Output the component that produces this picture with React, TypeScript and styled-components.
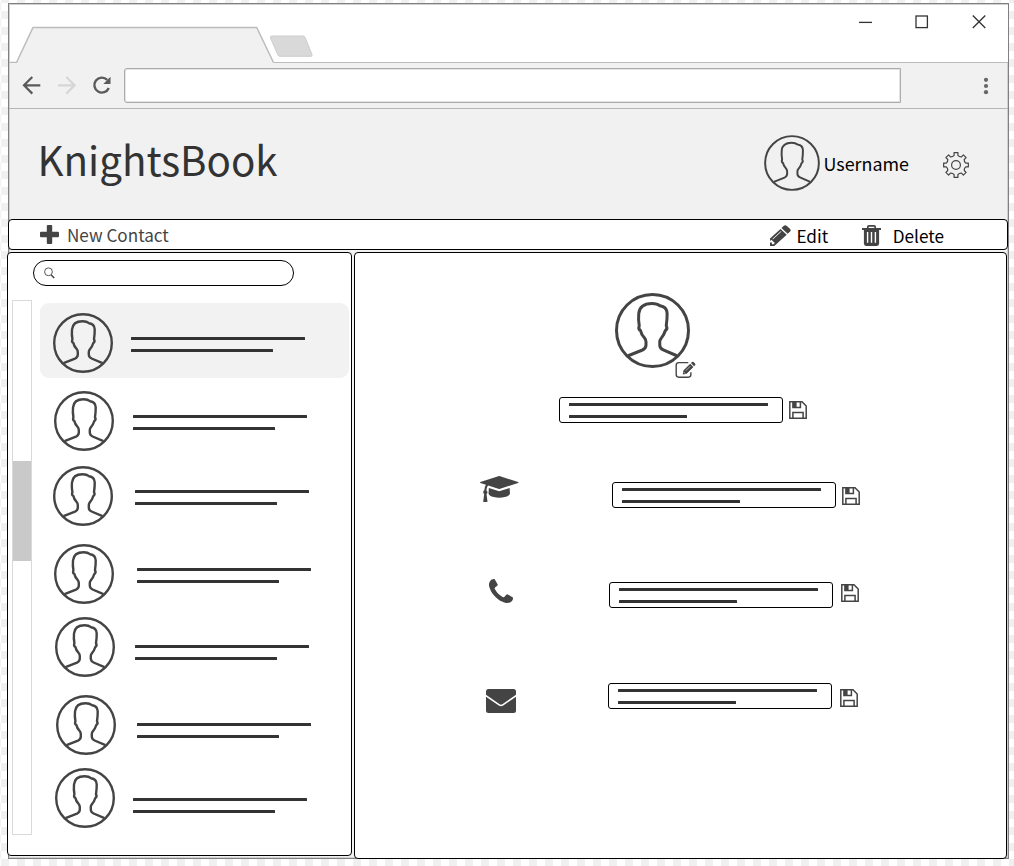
import React from 'react';
import styled, { createGlobalStyle } from 'styled-components';

const ink = '#444';

const GlobalStyle = createGlobalStyle`
  *, *::before, *::after { box-sizing: border-box; }
  body {
    margin: 0;
    overflow: hidden;
    font-family: 'Noto Sans CJK SC', 'Noto Sans', sans-serif;
    background: #fff conic-gradient(#fff 25%, #f0f0f0 0 50%, #fff 0 75%, #f0f0f0 0) 9px 3px / 16px 16px;
  }
  svg { display: block; flex: none; }
`;

const Page = styled.div`
  height: 866px;
  padding: 3px 0 0 8px;
`;

const Window = styled.main`
  width: 1001px;
  height: 856px;
  border: 1px solid #808080;
  background: #f1f1f1;
  box-shadow: inset 0 0 0 1px #d0d0d0;
`;

const TabStrip = styled.div`
  display: flex;
  justify-content: space-between;
  height: 59px;
  background: #fff;
  border-bottom: 1px solid #bcbcbc;
  box-shadow: inset 0 1px #d0d0d0, inset 1px 0 #d0d0d0;
`;

const WindowControls = styled.div`
  display: flex;
  gap: 43px;
  padding: 11px 22px 0 0;
`;

const AddressRow = styled.div`
  display: flex;
  align-items: center;
  height: 46px;
  padding: 0 17px 0 13px;
  border-bottom: 1px solid #b5b5b5;
`;

const NavButtons = styled.div`
  display: flex;
  gap: 15px;
  margin-top: -2px;
`;

const AddressField = styled.div`
  width: 776.5px;
  height: 35px;
  margin: -1px auto 0 12px;
  border: 1px solid #ababab;
  border-radius: 3px 0 0 3px;
  background: #fff;
  box-shadow: inset 0 0 0 1px #e4e4e4;
`;

const Header = styled.header`
  display: flex;
  align-items: center;
  height: 110px;
  padding: 0 39px 0 28.5px;
`;

const Title = styled.h1`
  margin: -10px auto 0 0;
  font-size: 40.3px;
  font-weight: 400;
  line-height: 60px;
  color: #333;
`;

const Label = styled.span<{ $color?: string; $left: number; $drop?: number; $size?: number }>`
  margin-left: ${p => p.$left}px;
  padding-top: ${p => p.$drop ?? 0}px;
  font-size: ${p => p.$size ?? 17.2}px;
  line-height: 24px;
  color: ${p => p.$color ?? '#000'};
`;

const User = styled.div`
  display: flex;
  align-items: center;
  margin: -2px 34px 0 0;
`;

const Settings = styled.div`
  padding-top: 2px;
`;

const Toolbar = styled.nav`
  display: flex;
  align-items: center;
  width: 1000px;
  height: 31px;
  margin-left: -1px;
  padding: 0 63px 0 31px;
  background: #fff;
  border: 1px solid #000;
  border-radius: 4px;
`;

const Action = styled.div<{ $left?: string }>`
  display: flex;
  align-items: center;
  margin-left: ${p => p.$left ?? '0'};
`;

const ActionIcon = styled.div`
  padding-top: 2px;
`;

const Panels = styled.div`
  display: flex;
  align-items: flex-start;
  gap: 2px;
  width: 1000px;
  margin: 2px 0 0 -2px;
`;

const Panel = styled.section<{ $width: number; $height: number }>`
  flex: none;
  width: ${p => p.$width}px;
  height: ${p => p.$height}px;
  background: #fff;
  border: 1px solid #000;
  border-radius: 4px;
`;

const SearchBox = styled.div`
  display: flex;
  align-items: center;
  width: 261px;
  height: 26px;
  margin: 7px 0 0 25px;
  padding-left: 10px;
  border: 1px solid #000;
  border-radius: 13px;
`;

const ListArea = styled.div`
  display: flex;
  align-items: flex-start;
  margin: 14px 0 0 4px;
`;

const ScrollTrack = styled.div`
  flex: none;
  width: 20px;
  height: 535px;
  padding-top: 160px;
  border: 1px solid #d9d9d9;
`;

const ScrollThumb = styled.div`
  height: 100px;
  background: #c9c9c9;
`;

const ContactList = styled.ul`
  display: grid;
  grid-template-rows: 78px 75px 78px 73px 78px 73px 75px;
  width: 309px;
  margin: 3px 0 0 8px;
  padding: 0;
  list-style: none;
`;

const ContactRow = styled.li<{ $selected: boolean; $left: number }>`
  display: flex;
  align-items: flex-start;
  height: 75px;
  padding: 10px 0 0 ${p => p.$left}px;
  border-radius: 9px;
  background: ${p => (p.$selected ? '#f2f2f2' : 'transparent')};
`;

const Lines = styled.div<{ $left?: number; $top?: number }>`
  display: grid;
  gap: 9px;
  margin: ${p => p.$top ?? 0}px 0 0 ${p => p.$left ?? 0}px;
`;

const Line = styled.div<{ $width: number }>`
  width: ${p => p.$width}px;
  height: 3px;
  border-radius: 0.5px;
  background: #333;
`;

const Portrait = styled.div`
  position: relative;
  width: 75px;
  margin: 40px 0 0 260px;
`;

const EditBadge = styled.div`
  position: absolute;
  left: 59.5px;
  top: 68px;
`;

const DetailRow = styled.div<{ $left: number; $top: number }>`
  display: flex;
  align-items: flex-start;
  height: 26px;
  margin: ${p => p.$top}px 0 0 ${p => p.$left}px;
`;

const IconCell = styled.div<{ $width: number; $shift: number }>`
  flex: none;
  width: ${p => p.$width}px;
  margin-top: ${p => p.$shift}px;
`;

const Field = styled.div`
  flex: none;
  width: 224px;
  height: 26px;
  padding: 5px 9px;
  border: 1px solid #000;
  border-radius: 3px;
`;

const SaveButton = styled.div<{ $left: number; $top: number }>`
  margin: ${p => p.$top}px 0 0 ${p => p.$left}px;
`;

const Avatar = ({ size, stroke = 2.4 }: { size: number; stroke?: number }) => (
  <svg width={size} height={size} viewBox="0 0 60 60" fill="none" stroke={ink} strokeWidth={stroke} strokeLinejoin="round">
    <circle cx="30" cy="30" r="28.8" />
    <path d="M10.5 50.2L22 45.6Q24.8 44.4 24.8 41.6V39Q24.8 37.4 23.5 35.8Q20.9 33 20.4 30Q18.4 29.2 19.4 26.1C18.8 23 18.7 20 19 16.5Q19.8 8.3 29.6 8.3Q33.8 8.3 36 10.2Q41.5 11 41.7 16.3Q41.8 21 41 26.1Q42.4 28.6 40.2 30.2Q39.3 33.4 36.9 36.3Q35.8 37.8 35.8 39V41.6Q35.8 44.3 38.6 45.5L49.5 50.2" />
  </svg>
);

const gearPath = () => {
  const at = (r: number, deg: number) => {
    const a = (deg * Math.PI) / 180;
    return `${(13 + r * Math.cos(a)).toFixed(2)} ${(13 + r * Math.sin(a)).toFixed(2)}`;
  };
  let d = '';
  for (let i = 0; i < 8; i++) {
    const c = i * 45;
    d += `${i ? 'L' : 'M'}${at(9.9, c - 11)}L${at(12.5, c - 9)}L${at(12.5, c + 9)}L${at(9.9, c + 11)}Q${at(8.7, c + 22.5)} ${at(9.9, c + 34)}`;
  }
  return d + 'Z';
};

const Gear = () => (
  <svg width="26" height="26" viewBox="0 0 26 26" fill="none" stroke={ink} strokeWidth="1.2" strokeLinejoin="round">
    <path d={gearPath()} />
    <circle cx="13" cy="13" r="4.4" />
  </svg>
);

const SaveIcon = () => (
  <svg width="18" height="18" viewBox="0 0 18 18" fill="none" stroke={ink} strokeWidth="1.5">
    <path d="M.8.8H13L17.2 5V17.2H.8Z" />
    <path d="M3.9.8V6.4H11.4V.8" />
    <path d="M4 1H7.6V6.2H4Z" fill={ink} stroke="none" />
    <path d="M3.9 17V11.6H14.1V17" />
  </svg>
);

const PencilIcon = () => (
  <svg width="21" height="21" viewBox="256 128 1408 1536" preserveAspectRatio="none" fill={ink}>
    <path d="M491 1536l91-91-235-235-91 91v107h128v128h107zm523-928q0-22-22-22-10 0-17 7l-542 542q-7 7-7 17 0 22 22 22 10 0 17-7l542-542q7-7 7-17zm-54-192l416 416-832 832h-416v-416zm683 96q0 53-37 90l-166 166-416-416 166-165q36-38 90-38 53 0 91 38l235 234q37 39 37 91z" />
  </svg>
);

const TrashIcon = () => (
  <svg width="19" height="21" viewBox="0 0 19 21" fill="none" stroke={ink}>
    <path d="M5.8 3.6V2Q5.8.9 7 .9H12Q13.2.9 13.2 2V3.6" strokeWidth="1.7" />
    <path d="M0 3H19V5H0Z" fill={ink} stroke="none" />
    <path d="M1.9 4.5H17.1V18.6Q17.1 21 14.9 21H4.1Q1.9 21 1.9 18.6Z" fill={ink} stroke="none" />
    <path d="M5.6 7V17.8M9.5 7V17.8M13.4 7V17.8" stroke="#fff" strokeWidth="1.4" />
  </svg>
);

const EditIcon = () => (
  <svg width="21" height="18" viewBox="0 0 21 18" fill="none" stroke={ink}>
    <path d="M13.3 1.6H3.8Q1.2 1.6 1.2 4.2V13.6Q1.2 16.2 3.8 16.2H13.3Q15.9 16.2 15.9 13.6V11.3" strokeWidth="1.4" />
    <path d="M7.8 13.6L8.4 9.6L15.2 2.8L18.4 6L11.6 12.8Z M15.9 2.1L17.1.9Q17.8.4 18.5 1L20.2 2.7Q20.8 3.4 20.2 4.1L19.1 5.3Z" fill={ink} stroke="none" />
    <path d="M10.8 9.7L15.3 5.2" stroke="#fff" strokeWidth=".6" />
    <path d="M8.9 11.2L10.2 12.5" stroke="#fff" strokeWidth=".7" />
  </svg>
);

const PlusIcon = () => (
  <svg width="19" height="19" viewBox="0 0 19 19" fill={ink}>
    <path d="M7.8 0H11.2Q12.2 0 12.2 1V6.8H18Q19 6.8 19 7.8V11.2Q19 12.2 18 12.2H12.2V18Q12.2 19 11.2 19H7.8Q6.8 19 6.8 18V12.2H1Q0 12.2 0 11.2V7.8Q0 6.8 1 6.8H6.8V1Q6.8 0 7.8 0Z" />
  </svg>
);

const CapIcon = () => (
  <svg width="38.5" height="26" viewBox="0 128 2304 1536" preserveAspectRatio="none" fill={ink}>
    <path d="M1774 836l18 316q4 69-82 128t-235 93.500-323 34.500-323-34.500-235-93.500-82-128l18-316 574 181q22 7 48 7t48-7zm530-324q0 23-22 31l-1120 352q-4 1-10 1t-10-1l-652-206q-43 34-71 111.500t-34 178.500q63 36 63 109 0 69-58 107l58 433q2 14-8 25-9 11-24 11h-192q-15 0-24-11-10-11-8-25l58-433q-58-38-58-107 0-73 65-111 11-207 98-330l-333-104q-22-8-22-31t22-31l1120-352q4-1 10-1t10 1l1120 352q22 8 22 31z" />
  </svg>
);

const PhoneIcon = () => (
  <svg width="24" height="24" viewBox="192 128 1408 1408" fill={ink}>
    <path d="M1600 1240q0 27-10 70.500t-21 68.500q-21 50-122 106-94 51-186 51-27 0-53-3.500t-57.500-12.500-47-14.500-55.500-20.500-49-18q-98-35-175-83-127-79-264-216t-216-264q-48-77-83-175-3-9-18-49t-20.500-55.500-14.500-47-12.500-57.500-3.500-53q0-92 51-186 56-101 106-122 25-11 68.500-21t70.500-10q14 0 21 3 18 6 53 76 11 19 30 54t35 63.500 31 53.500q3 4 17.500 25t21.500 35.500 7 28.500q0 20-28.500 50t-62 55-62 53-28.500 46q0 9 5 22.500t8.500 20.500 14 24 11.500 19q76 137 174 235t235 174q2 1 19 11.500t24 14 20.500 8.500 22.500 5q18 0 46-28.500t53-62 55-62 50-28.500q14 0 28.500 7t35.500 21.500 25 17.500q25 15 53.500 31t63.500 35 54 30q70 35 76 53 3 7 3 21z" />
  </svg>
);

const MailIcon = () => (
  <svg width="30" height="24" viewBox="0 0 30 24">
    <rect width="30" height="24" rx="2.5" fill={ink} />
    <path d="M-.5 6.3L13.2 15.9Q15 17.2 16.8 15.9L30.5 6.3" fill="none" stroke="#fff" strokeWidth="1.6" />
  </svg>
);

const SearchIcon = () => (
  <svg width="11" height="12" viewBox="0 0 11 12" fill="none" stroke={ink}>
    <circle cx="4.5" cy="4.8" r="3.9" strokeWidth=".9" />
    <path d="M7.2 7.9L10.2 11" strokeWidth="1.5" />
  </svg>
);

const TextLines = ({ left, top, widths }: { left?: number; top?: number; widths: number[] }) => (
  <Lines $left={left} $top={top}>
    {widths.map(w => <Line key={w} $width={w} />)}
  </Lines>
);

// Avatar inset, line inset and line offset of every contact, in pixels.
const contacts = [
  { x: 13, lineX: 91, lineY: 24 },
  { x: 14, lineX: 93, lineY: 24 },
  { x: 13, lineX: 95, lineY: 24 },
  { x: 14, lineX: 97, lineY: 24 },
  { x: 15, lineX: 95, lineY: 28 },
  { x: 16, lineX: 97, lineY: 28 },
  { x: 15, lineX: 93, lineY: 30 },
];

const details = [
  { icon: <CapIcon />, left: 125, top: 59, width: 132, shift: -6, saveLeft: 6, saveTop: 5 },
  { icon: <PhoneIcon />, left: 134, top: 74, width: 120, shift: -3, saveLeft: 8, saveTop: 2 },
  { icon: <MailIcon />, left: 131, top: 75, width: 122, shift: 6, saveLeft: 8, saveTop: 6 },
];

export default function App() {
  return (
    <Page>
      <GlobalStyle />
      <Window>
        <TabStrip>
          <svg width="320" height="59" viewBox="0 0 320 59">
            <path d="M0 58.5H7.5L24 23.5H247.7L264.5 58.5V60H0Z" fill="#f1f1f1" />
            <path d="M0 58.5H7.5L24 23.5H247.7L264.5 58.5" fill="none" stroke="#bcbcbc" strokeWidth="1.5" />
            <path d="M262.5 32H294Q295.3 32 296 33.3L303 50.5Q303.5 52.3 302 52.3H271Q269.6 52.3 268.9 51L261.5 34Q261 32 262.5 32Z" fill="#d9d9d9" stroke="#cdcdcd" />
          </svg>
          <WindowControls>
            <svg width="13" height="14" viewBox="0 0 13 14" stroke="#333" strokeWidth="1.3"><path d="M0 7.4H13" /></svg>
            <svg width="14" height="14" viewBox="0 0 14 14" fill="none" stroke="#333" strokeWidth="1.3"><rect x="1" y="1" width="11.4" height="11.6" /></svg>
            <svg width="14" height="14" viewBox="0 0 14 14" stroke="#333" strokeWidth="1.3"><path d="M.8.5L13.3 13M13.3.5L.8 13" /></svg>
          </WindowControls>
        </TabStrip>
        <AddressRow>
          <NavButtons>
            <svg width="20" height="20" viewBox="0 0 20 20" fill="none" stroke="#5a5a5a" strokeWidth="2.2"><path d="M18.3 10.3H2.5M10.3 2L2 10.3L10.3 18.6" /></svg>
            <svg width="20" height="20" viewBox="0 0 20 20" fill="none" stroke="#d6d6d6" strokeWidth="2.2"><path d="M1 10.3H17M9.3 2L17.6 10.3L9.3 18.6" /></svg>
            <svg width="20" height="20" viewBox="0 0 20 20" fill="none" stroke="#5a5a5a" strokeWidth="2.4">
              <path d="M15.2 4.8A7.5 7.5 0 1 0 16.8 13" />
              <path d="M18.5 1.7V8.9H11.3Z" fill="#5a5a5a" stroke="none" />
            </svg>
          </NavButtons>
          <AddressField />
          <svg width="10" height="20" viewBox="0 0 10 20" fill="#666">
            <circle cx="5" cy="3.8" r="2.1" /><circle cx="5" cy="10" r="2.1" /><circle cx="5" cy="16.2" r="2.1" />
          </svg>
        </AddressRow>
        <Header>
          <Title>KnightsBook</Title>
          <User>
            <Avatar size={56} stroke={2.1} />
            <Label $left={3.5} $size={17.9}>Username</Label>
          </User>
          <Settings><Gear /></Settings>
        </Header>
        <Toolbar>
          <Action>
            <PlusIcon />
            <Label $left={8} $drop={1} $color="#444" $size={17.1}>New Contact</Label>
          </Action>
          <Action $left="auto">
            <ActionIcon><PencilIcon /></ActionIcon>
            <Label $left={5} $drop={3}>Edit</Label>
          </Action>
          <Action $left="33.5px">
            <ActionIcon><TrashIcon /></ActionIcon>
            <Label $left={12} $drop={2}>Delete</Label>
          </Action>
        </Toolbar>
        <Panels>
          <Panel $width={345} $height={604}>
            <SearchBox><SearchIcon /></SearchBox>
            <ListArea>
              <ScrollTrack><ScrollThumb /></ScrollTrack>
              <ContactList>
                {contacts.map((c, i) => (
                  <ContactRow key={i} $selected={i === 0} $left={c.x}>
                    <Avatar size={60} />
                    <TextLines left={c.lineX - c.x - 60} top={c.lineY} widths={[174, 142]} />
                  </ContactRow>
                ))}
              </ContactList>
            </ListArea>
          </Panel>
          <Panel $width={653} $height={607}>
            <Portrait>
              <Avatar size={75} />
              <EditBadge><EditIcon /></EditBadge>
            </Portrait>
            <DetailRow $left={204} $top={29}>
              <Field><TextLines widths={[199, 118]} /></Field>
              <SaveButton $left={6} $top={4}><SaveIcon /></SaveButton>
            </DetailRow>
            {details.map((d, i) => (
              <DetailRow key={i} $left={d.left} $top={d.top}>
                <IconCell $width={d.width} $shift={d.shift}>{d.icon}</IconCell>
                <Field><TextLines widths={[199, 118]} /></Field>
                <SaveButton $left={d.saveLeft} $top={d.saveTop}><SaveIcon /></SaveButton>
              </DetailRow>
            ))}
          </Panel>
        </Panels>
      </Window>
    </Page>
  );
}
